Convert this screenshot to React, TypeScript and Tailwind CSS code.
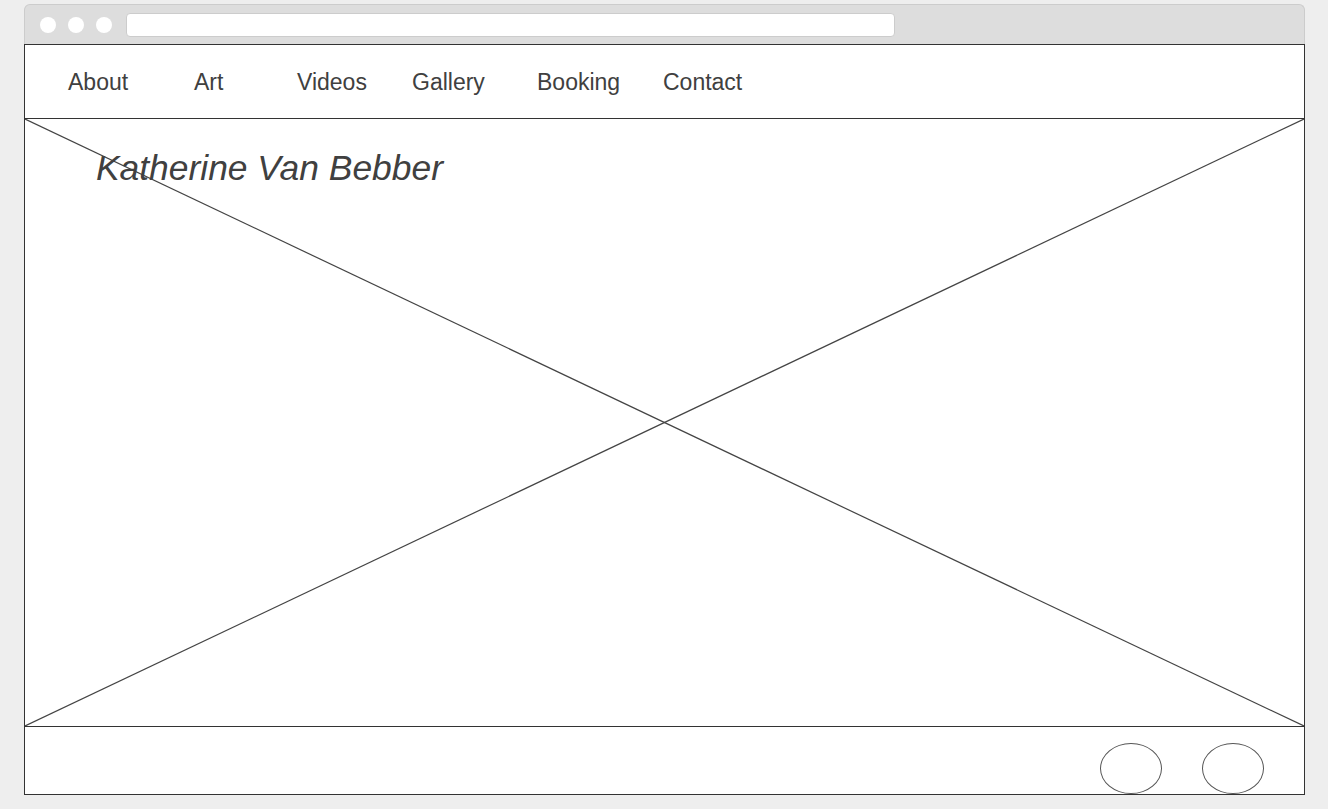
const navItems = [
  { label: 'About', width: 'w-[126px]' },
  { label: 'Art', width: 'w-[103px]' },
  { label: 'Videos', width: 'w-[115px]' },
  { label: 'Gallery', width: 'w-[125px]' },
  { label: 'Booking', width: 'w-[126px]' },
  { label: 'Contact', width: 'w-[126px]' }
];

export default function App() {
  return (
    <div className="min-h-screen w-full bg-[#eeeeee] pt-[4px] pl-[24px] font-['Liberation_Sans',Arial,sans-serif] text-[#404040]">
      <div className="w-[1281px]">
        {/* browser chrome */}
        <div className="h-[40px] bg-[#dddddd] border border-b-0 border-[#cccccc] rounded-t-[6px] flex items-center pl-[15px]">
          <div className="flex gap-[12px]">
            <span className="w-[16px] h-[16px] rounded-full bg-white" />
            <span className="w-[16px] h-[16px] rounded-full bg-white" />
            <span className="w-[16px] h-[16px] rounded-full bg-white" />
          </div>
          <div className="ml-[14px] w-[769px] h-[24px] bg-white border border-[#cccccc] rounded-[4px]" />
        </div>

        <div className="border border-[#333333] bg-white">
          {/* nav */}
          <nav className="h-[74px] flex items-center pl-[43px] pt-[2px] border-b border-[#333333]">
            {navItems.map((item) => (
              <span key={item.label} className={`${item.width} text-[23px] leading-none`}>
                {item.label}
              </span>
            ))}
          </nav>

          {/* hero */}
          <div className="relative h-[608px] border-b border-[#333333] pt-[29px] pl-[71px]">
            <svg className="absolute inset-0 w-full h-full" preserveAspectRatio="none" viewBox="0 0 1279 607">
              <line x1="0" y1="0" x2="1279" y2="607" stroke="#444444" strokeWidth="1.2" vectorEffect="non-scaling-stroke" />
              <line x1="1279" y1="0" x2="0" y2="607" stroke="#444444" strokeWidth="1.2" vectorEffect="non-scaling-stroke" />
            </svg>
            <h1 className="relative text-[35.4px] leading-[40px] italic">Katherine Van Bebber</h1>
          </div>

          {/* footer */}
          <div className="h-[67px] flex justify-end items-end gap-[40px] pr-[40px]">
            <span className="w-[62px] h-[51px] rounded-[50%] border border-[#555555]" />
            <span className="w-[62px] h-[51px] rounded-[50%] border border-[#555555]" />
          </div>
        </div>
      </div>
    </div>
  );
}
